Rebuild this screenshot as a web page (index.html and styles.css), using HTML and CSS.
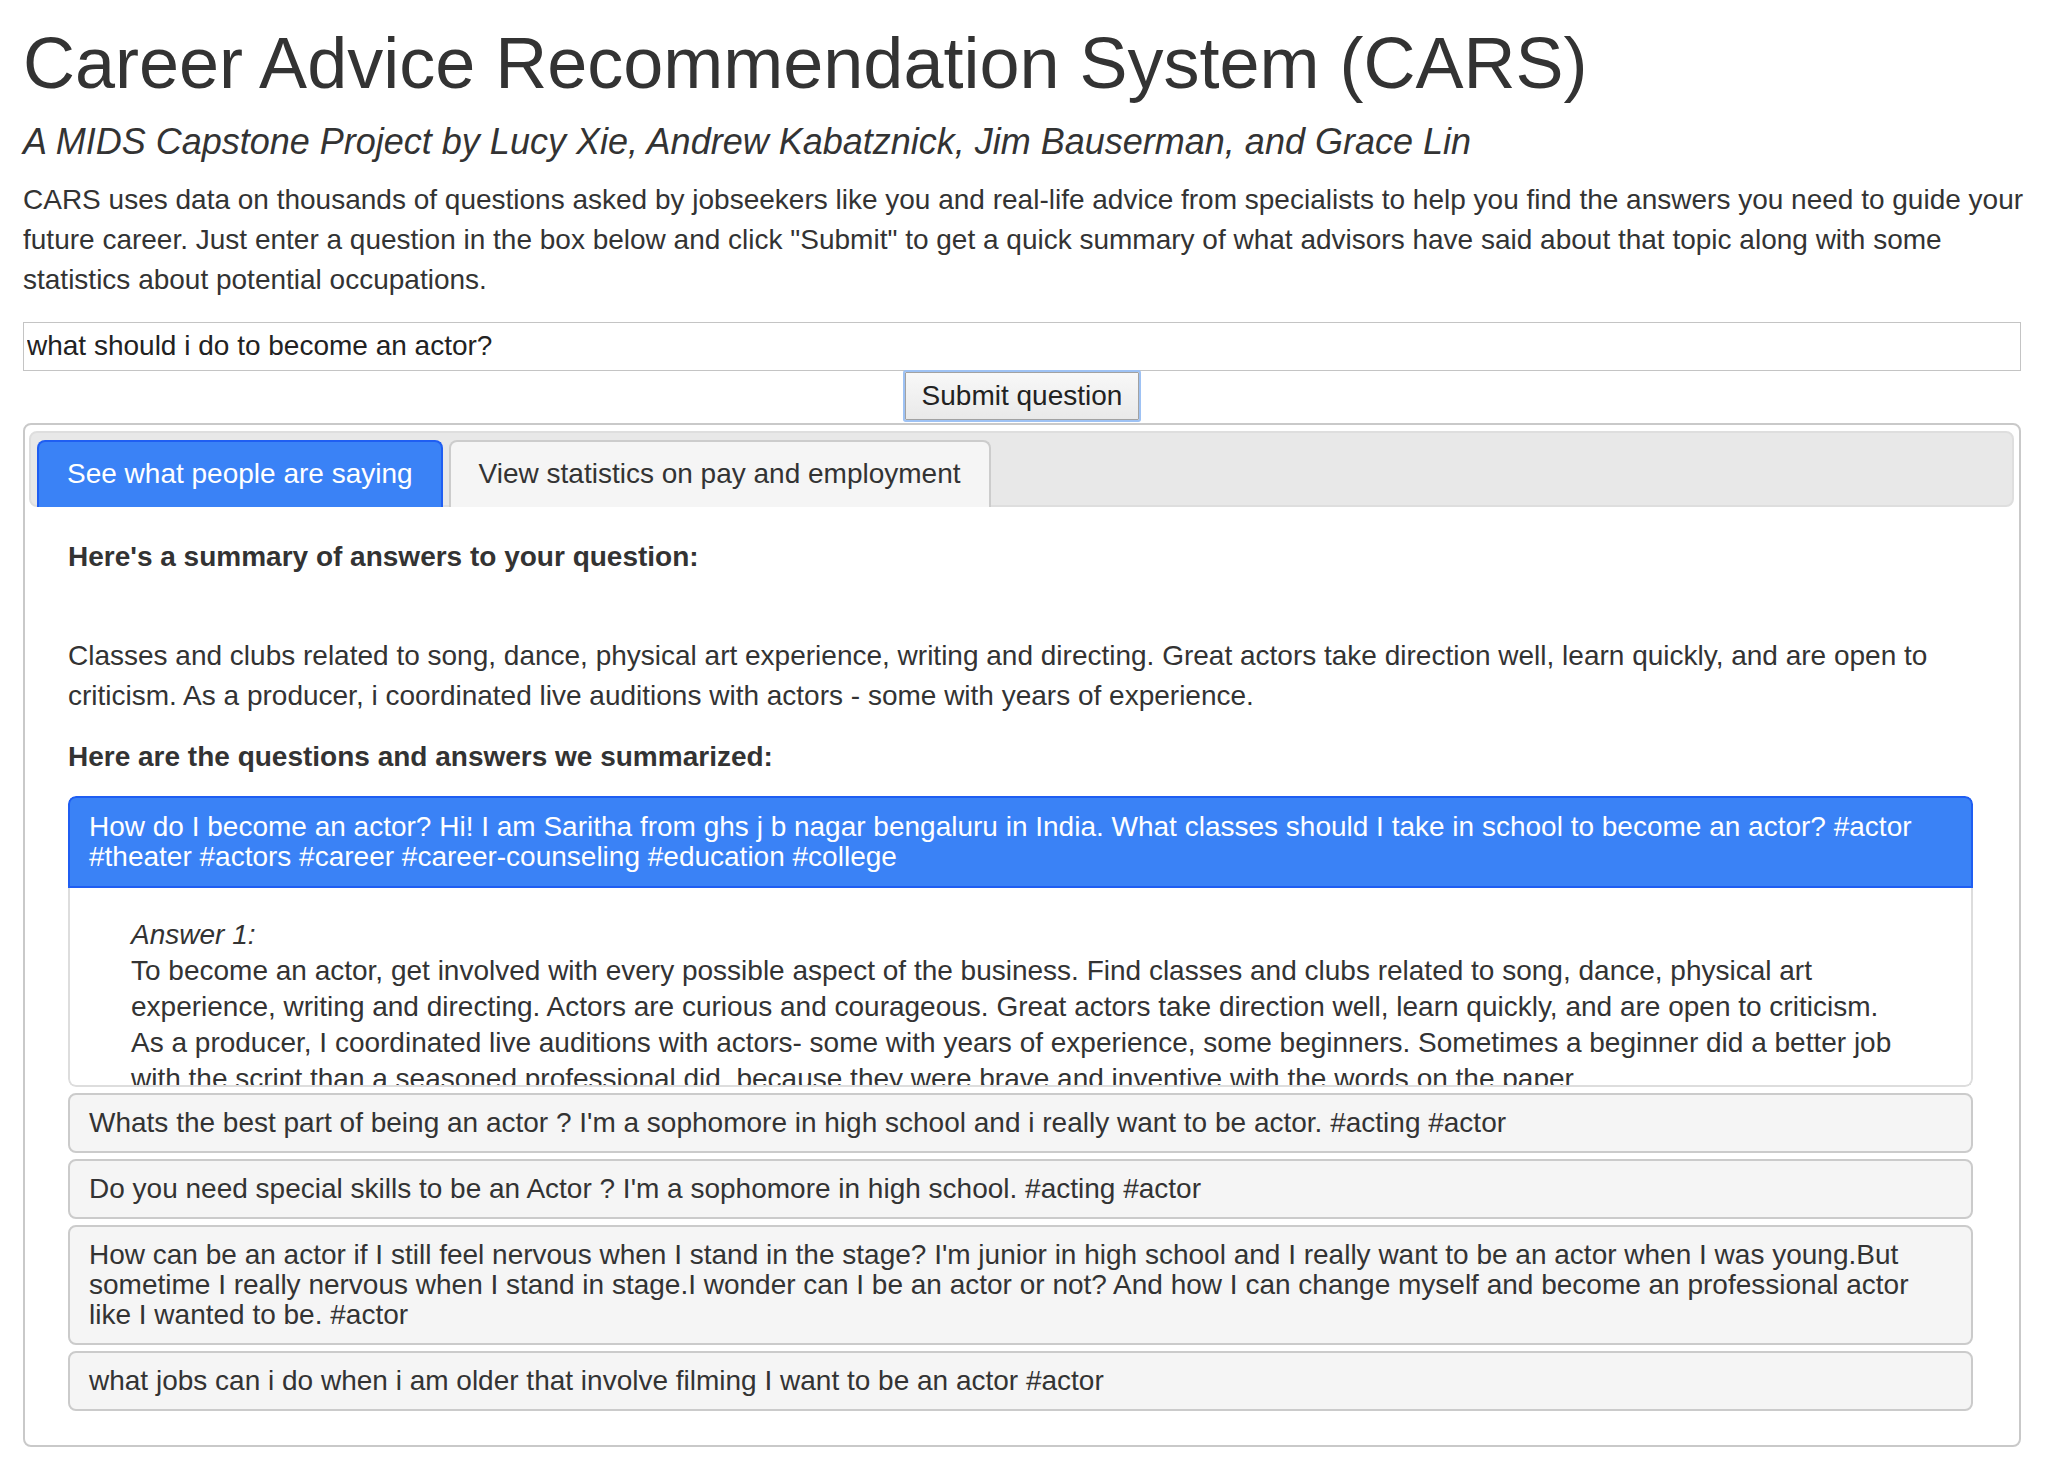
FILE: index.html
```html
<!DOCTYPE html>
<html lang="en">
<head>
<meta charset="utf-8">
<title>Career Advice Recommendation System (CARS)</title>
<link rel="stylesheet" href="styles.css">
</head>
<body>
<div class="page">
  <h1 class="title">Career Advice Recommendation System (CARS)</h1>
  <h4 class="subtitle">A MIDS Capstone Project by Lucy Xie, Andrew Kabatznick, Jim Bauserman, and Grace Lin</h4>
  <p class="intro">CARS uses data on thousands of questions asked by jobseekers like you and real-life advice from specialists to help you find the answers you need to guide your future career. Just enter a question in the box below and click "Submit" to get a quick summary of what advisors have said about that topic along with some statistics about potential occupations.</p>
  <input class="question-input" type="text" value="what should i do to become an actor?">
  <div class="submit-row"><button class="submit-btn" type="button">Submit question</button></div>

  <div class="tabset">
    <div class="tabbar">
      <div class="tab tab-active">See what people are saying</div>
      <div class="tab">View statistics on pay and employment</div>
    </div>
    <div class="tab-content">
      <p class="lead-bold">Here's a summary of answers to your question:</p>
      <p class="summary">Classes and clubs related to song, dance, physical art experience, writing and directing. Great actors take direction well, learn quickly, and are open to criticism. As a producer, i coordinated live auditions with actors - some with years of experience.</p>
      <p class="lead-bold lead-2">Here are the questions and answers we summarized:</p>

      <div class="qgroup">
        <div class="qpanel open">
          <div class="qhead">How do I become an actor? Hi! I am Saritha from ghs j b nagar bengaluru in India. What classes should I take in school to become an actor? #actor #theater #actors #career #career-counseling #education #college</div>
          <div class="qbody">
            <div class="answer">
              <div class="answer-label">Answer 1:</div>
              <div class="answer-text">To become an actor, get involved with every possible aspect of the business. Find classes and clubs related to song, dance, physical art experience, writing and directing. Actors are curious and courageous. Great actors take direction well, learn quickly, and are open to criticism. As a producer, I coordinated live auditions with actors- some with years of experience, some beginners. Sometimes a beginner did a better job with the script than a seasoned professional did, because they were brave and inventive with the words on the paper.</div>
            </div>
          </div>
        </div>
        <div class="qpanel"><div class="qhead">Whats the best part of being an actor ? I'm a sophomore in high school and i really want to be actor. #acting #actor</div></div>
        <div class="qpanel"><div class="qhead">Do you need special skills to be an Actor ? I'm a sophomore in high school. #acting #actor</div></div>
        <div class="qpanel"><div class="qhead">How can be an actor if I still feel nervous when I stand in the stage? I'm junior in high school and I really want to be an actor when I was young.But sometime I really nervous when I stand in stage.I wonder can I be an actor or not? And how I can change myself and become an professional actor like I wanted to be. #actor</div></div>
        <div class="qpanel"><div class="qhead">what jobs can i do when i am older that involve filming I want to be an actor #actor</div></div>
      </div>
    </div>
  </div>
</div>
</body>
</html>
```
FILE: styles.css
```css
html, body {
  margin: 0;
  padding: 0;
  background: #ffffff;
}

body {
  font-family: "Liberation Sans", Helvetica, Arial, sans-serif;
  font-size: 28px;
  line-height: 40px;
  color: #333333;
}

.page {
  padding: 0 23px 25px 23px;
}

.title {
  font-size: 72px;
  font-weight: 400;
  line-height: 1.1;
  margin: 24px 0 19px 0;
  color: #333333;
}

.subtitle {
  font-size: 36px;
  font-weight: 400;
  font-style: italic;
  line-height: 1.1;
  margin: 0 0 18px 0;
  color: #333333;
}

.intro {
  margin: 0 0 22px 0;
}

.question-input {
  display: block;
  box-sizing: border-box;
  width: calc(100% - 12px);
  height: 49px;
  margin: 0;
  padding: 0 3px;
  border: 1px solid #c4c4c4;
  border-radius: 0;
  font-family: inherit;
  font-size: 28px;
  color: #222222;
  background: #ffffff;
  outline: none;
}

.submit-row {
  display: flex;
  justify-content: center;
  width: calc(100% - 12px);
  margin-top: 1px;
}

.submit-btn {
  box-sizing: border-box;
  height: 48px;
  padding: 0 16px;
  border: 1px solid #a2a2a2;
  border-radius: 1px;
  box-shadow: 0 0 0 2px #9ec2f4;
  background: linear-gradient(#f8f8f8, #e9e9e9);
  font-family: inherit;
  font-size: 28px;
  line-height: 40px;
  color: #222222;
}

.tabset {
  margin: 3px 12px 0 0;
  border: 2px solid #c9c9c9;
  border-radius: 8px;
}

.tabbar {
  display: flex;
  align-items: flex-end;
  gap: 6px;
  margin: 6px 5px 0 4px;
  padding: 7px 6px 0 6px;
  background: #e8e8e8;
  border: 2px solid #dedede;
  border-radius: 8px;
}

.tab {
  box-sizing: border-box;
  height: 67px;
  margin-bottom: -2px;
  padding: 12px 28px 13px 28px;
  border: 2px solid #cccccc;
  border-bottom: none;
  border-radius: 8px 8px 0 0;
  background: #f5f5f5;
  color: #333333;
  white-space: nowrap;
}

.tab-active {
  background: #3a82f6;
  border-color: #1f5ef2;
  color: #ffffff;
}

.tab-content {
  padding: 30px 46px 34px 43px;
}

.tab-content p {
  margin: 0;
}

.lead-bold {
  font-weight: 700;
}

.summary {
  margin-top: 59px !important;
}

.lead-2 {
  margin-top: 21px !important;
}

.qgroup {
  display: flex;
  flex-direction: column;
  gap: 6px;
  margin-top: 19px;
}

.qpanel {
  border: 2px solid #cbcbcb;
  border-radius: 8px;
  background: #f5f5f5;
  overflow: hidden;
}

.qhead {
  padding: 13px 30px 13px 19px;
  line-height: 30px;
}

.qpanel.open {
  border: none;
  background: #ffffff;
}

.qpanel.open .qhead {
  padding: 14px 30px 14px 19px;
  background: #3a82f6;
  border: 2px solid #1f5ef2;
  border-radius: 8px 8px 0 0;
  color: #ffffff;
}

.qbody {
  box-sizing: border-box;
  height: 199px;
  overflow: hidden;
  border: 2px solid #dddddd;
  border-top: none;
  border-radius: 0 0 8px 8px;
  background: #ffffff;
  padding: 29px 66px 0 61px;
}

.answer {
  line-height: 36px;
}

.answer-label {
  font-style: italic;
}
```
